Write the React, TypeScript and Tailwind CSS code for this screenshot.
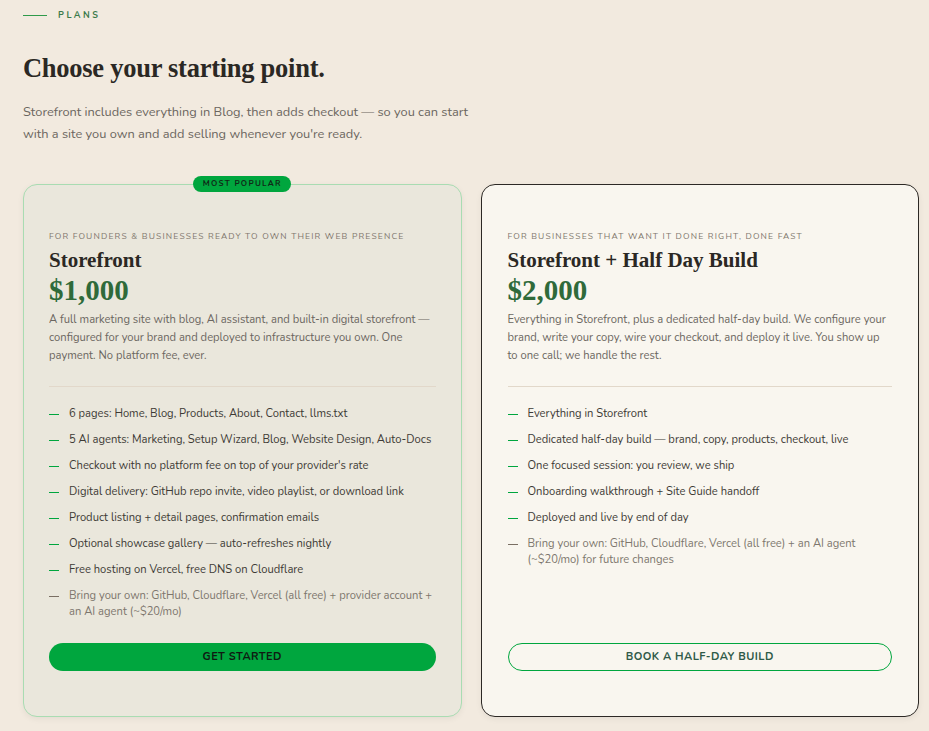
const plans = [
    {
        id: 1,
        featured: true,
        eyebrow: "For founders & businesses ready to own their web presence",
        name: "Storefront",
        price: "$1,000",
        description:
            "A full marketing site with blog, AI assistant, and built-in digital storefront — configured for your brand and deployed to infrastructure you own. One payment. No platform fee, ever.",
        features: [
            "6 pages: Home, Blog, Products, About, Contact, llms.txt",
            "5 AI agents: Marketing, Setup Wizard, Blog, Website Design, Auto-Docs",
            "Checkout with no platform fee on top of your provider's rate",
            "Digital delivery: GitHub repo invite, video playlist, or download link",
            "Product listing + detail pages, confirmation emails",
            "Optional showcase gallery — auto-refreshes nightly",
            "Free hosting on Vercel, free DNS on Cloudflare",
        ],
        note: "Bring your own: GitHub, Cloudflare, Vercel (all free) + provider account + an AI agent (~$20/mo)",
        cta: "Get started",
    },
    {
        id: 2,
        featured: false,
        eyebrow: "For businesses that want it done right, done fast",
        name: "Storefront + Half Day Build",
        price: "$2,000",
        description:
            "Everything in Storefront, plus a dedicated half-day build. We configure your brand, write your copy, wire your checkout, and deploy it live. You show up to one call; we handle the rest.",
        features: [
            "Everything in Storefront",
            "Dedicated half-day build — brand, copy, products, checkout, live",
            "One focused session: you review, we ship",
            "Onboarding walkthrough + Site Guide handoff",
            "Deployed and live by end of day",
        ],
        note: "Bring your own: GitHub, Cloudflare, Vercel (all free) + an AI agent (~$20/mo) for future changes",
        cta: "Book a half-day build",
    },
]

const serif = "font-['Liberation_Serif',serif]"

const App = () => {
    return (
        <div className="min-h-[731px] w-full bg-[#f2eadf] pl-[23px] pr-[10px] pt-[8px] pb-[14px] font-['Nunito','Lato',sans-serif] text-[#2b2824]">
            <div className="flex items-center gap-x-[11px] h-[14px]">
                <div className="w-[24px] h-px bg-[#2f9a4a]"></div>
                <div className="text-[9px] font-bold tracking-[0.28em] text-[#3b7a4a] leading-[14px]">PLANS</div>
            </div>
            <h1 className={`${serif} mt-[29px] text-[26.5px] font-bold leading-[34px] tracking-[-0.01em] text-[#2b2824]`}>
                Choose your starting point.
            </h1>
            <p className="mt-[16px] w-[460px] text-[12.8px] leading-[22px] text-[#6b6660]">
                Storefront includes everything in Blog, then adds checkout — so you can start with a site you own and add selling whenever you're ready.
            </p>
            <div className="mt-[39px] grid grid-cols-2 gap-x-[19px]">
                {plans.map((plan) => (
                    <div
                        key={plan.id}
                        className={
                            plan.featured
                                ? "relative flex flex-col rounded-[14px] border border-[#a9dcb2] bg-[#eae7dc] px-[25px] pt-[45px] pb-[45px] shadow-[0_2px_6px_rgba(0,0,0,0.06)]"
                                : "relative flex flex-col rounded-[14px] border border-[#2d2925] bg-[#f9f6ef] px-[26px] pt-[45px] pb-[45px] shadow-[0_2px_6px_rgba(0,0,0,0.06)]"
                        }
                    >
                        {plan.featured && (
                            <div className="absolute left-1/2 top-[-9px] -translate-x-1/2 h-[16px] w-[98px] rounded-full bg-[#00a63e] flex items-center justify-center text-[8px] font-bold tracking-[0.16em] text-[#102a18]">
                                MOST POPULAR
                            </div>
                        )}
                        <div className="text-[8.5px] leading-[12px] tracking-[0.14em] uppercase text-[#7f766c] whitespace-nowrap">{plan.eyebrow}</div>
                        <div className={`${serif} mt-[4px] text-[21px] font-bold leading-[28px]`}>{plan.name}</div>
                        <div className={`${serif} text-[29px] font-bold leading-[32px] text-[#2f6a3a]`}>{plan.price}</div>
                        <p className="mt-[5px] text-[11.2px] leading-[18px] text-[#6b6660]">{plan.description}</p>
                        <div className="mt-[21px] h-px w-full bg-[#e2d8ca]"></div>
                        <div className="mt-[19px] flex flex-col gap-y-[10px]">
                            {plan.features.map((feature, index) => (
                                <div key={index} className="flex flex-row gap-x-[10px] text-[11.2px] leading-[16px] text-[#3d3a35]">
                                    <span className="mt-[8px] h-px w-[10px] shrink-0 bg-[#00a63e]"></span>
                                    <span>{feature}</span>
                                </div>
                            ))}
                            <div className="flex flex-row gap-x-[10px] text-[11.2px] leading-[16px] text-[#7d766d]">
                                <span className="mt-[8px] h-px w-[10px] shrink-0 bg-[#7a6f63]"></span>
                                <span>{plan.note}</span>
                            </div>
                        </div>
                        <button
                            className={
                                plan.featured
                                    ? "mt-[23px] h-[28px] w-full rounded-full bg-[#00a63e] text-[11px] font-bold tracking-[0.04em] uppercase text-[#0f1a12]"
                                    : "mt-auto h-[28px] w-full rounded-full border border-[#00a63e] text-[11px] font-bold tracking-[0.04em] uppercase text-[#2f5a48]"
                            }
                        >
                            {plan.cta}
                        </button>
                    </div>
                ))}
            </div>
        </div>
    )
}

export default App
